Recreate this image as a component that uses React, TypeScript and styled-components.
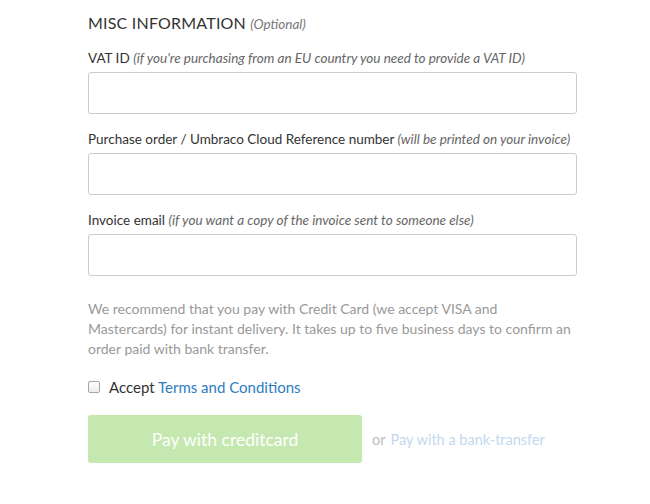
import React from 'react';
import styled, { createGlobalStyle } from 'styled-components';

const GlobalStyle = createGlobalStyle`
  html, body {
    margin: 0;
    padding: 0;
    background: #ffffff;
  }
  body {
    font-family: Lato, "Open Sans", sans-serif;
    color: #333333;
  }
`;

const Page = styled.div`
  width: 489px;
  padding: 12px 0 0 88px;
`;

const Heading = styled.h3`
  margin: 0 0 14px;
  font-size: 16px;
  font-weight: 400;
  line-height: 22px;
  letter-spacing: 0.2px;
  color: #333333;

  em {
    font-size: 13.5px;
    color: #777777;
    letter-spacing: 0;
  }
`;

const Field = styled.div`
  display: flex;
  flex-direction: column;
  gap: 5px;
  margin-bottom: 16px;
`;

const Label = styled.label`
  font-size: 13.5px;
  line-height: 18px;
  color: #333333;

  em {
    color: #666666;
  }
`;

const Input = styled.input`
  box-sizing: border-box;
  width: 100%;
  height: 42px;
  border: 1px solid #cccccc;
  border-radius: 3px;
  padding: 0 10px;
  font: inherit;
  outline: none;
`;

const Note = styled.p`
  margin: 23px 0 18px;
  font-size: 14px;
  line-height: 20px;
  color: #999999;
`;

const CheckRow = styled.label`
  display: flex;
  align-items: center;
  gap: 9px;
  font-size: 15px;
  line-height: 20px;
  color: #333333;
  margin-bottom: 18px;
`;

const Box = styled.span`
  box-sizing: border-box;
  width: 12px;
  height: 12px;
  border: 1px solid #a6a6a6;
  border-radius: 2px;
  background: linear-gradient(#ffffff, #ececec);
`;

const Link = styled.a<{ faded?: boolean }>`
  color: ${({ faded }) => (faded ? '#c2d9ef' : '#2d7cc1')};
  text-decoration: none;
`;

const Actions = styled.div`
  display: flex;
  align-items: center;
  font-size: 14.5px;
`;

const PayButton = styled.button`
  width: 274px;
  height: 48px;
  border: none;
  border-radius: 3px;
  background: #c5e8b0;
  color: #ffffff;
  font-family: inherit;
  font-size: 17.5px;
  padding: 0;
`;

const Or = styled.span`
  color: #bbbbbb;
  margin: 0 5px 0 10px;
`;

const fields = [
  { label: 'VAT ID', hint: "(if you're purchasing from an EU country you need to provide a VAT ID)" },
  { label: 'Purchase order / Umbraco Cloud Reference number', hint: '(will be printed on your invoice)' },
  { label: 'Invoice email', hint: '(if you want a copy of the invoice sent to someone else)' },
];

const App: React.FC = () => {
  return (
    <>
      <GlobalStyle />
      <Page>
        <Heading>
          MISC INFORMATION <em>(Optional)</em>
        </Heading>
        {fields.map((f, i) => (
          <Field key={i}>
            <Label>
              {f.label} <em>{f.hint}</em>
            </Label>
            <Input type="text" />
          </Field>
        ))}
        <Note>
          We recommend that you pay with Credit Card (we accept VISA and Mastercards) for instant delivery. It
          takes up to five business days to confirm an order paid with bank transfer.
        </Note>
        <CheckRow>
          <Box />
          <span>
            Accept <Link href="#">Terms and Conditions</Link>
          </span>
        </CheckRow>
        <Actions>
          <PayButton>Pay with creditcard</PayButton>
          <Or>or</Or>
          <Link faded href="#">Pay with a bank-transfer</Link>
        </Actions>
      </Page>
    </>
  );
};

export default App;
